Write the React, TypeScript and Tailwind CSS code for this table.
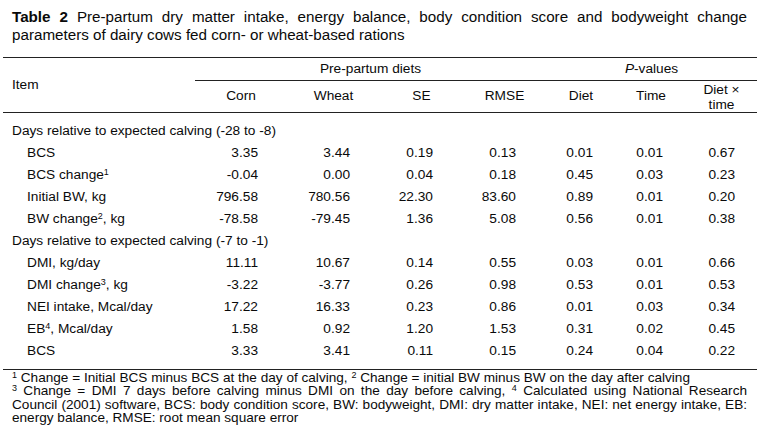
const font = { fontFamily: '"Liberation Sans", Arial, sans-serif' }

type Row = {
  label: React.ReactNode
  values?: string[]
  section?: boolean
}

const rows: Row[] = [
  { label: 'Days relative to expected calving (-28 to -8)', section: true },
  { label: 'BCS', values: ['3.35', '3.44', '0.19', '0.13', '0.01', '0.01', '0.67'] },
  {
    label: (
      <>
        BCS change<sup className="text-[9px]">1</sup>
      </>
    ),
    values: ['-0.04', '0.00', '0.04', '0.18', '0.45', '0.03', '0.23'],
  },
  { label: 'Initial BW, kg', values: ['796.58', '780.56', '22.30', '83.60', '0.89', '0.01', '0.20'] },
  {
    label: (
      <>
        BW change<sup className="text-[9px]">2</sup>, kg
      </>
    ),
    values: ['-78.58', '-79.45', '1.36', '5.08', '0.56', '0.01', '0.38'],
  },
  { label: 'Days relative to expected calving (-7 to -1)', section: true },
  { label: 'DMI, kg/day', values: ['11.11', '10.67', '0.14', '0.55', '0.03', '0.01', '0.66'] },
  {
    label: (
      <>
        DMI change<sup className="text-[9px]">3</sup>, kg
      </>
    ),
    values: ['-3.22', '-3.77', '0.26', '0.98', '0.53', '0.01', '0.53'],
  },
  { label: 'NEI intake, Mcal/day', values: ['17.22', '16.33', '0.23', '0.86', '0.01', '0.03', '0.34'] },
  {
    label: (
      <>
        EB<sup className="text-[9px]">4</sup>, Mcal/day
      </>
    ),
    values: ['1.58', '0.92', '1.20', '1.53', '0.31', '0.02', '0.45'],
  },
  { label: 'BCS', values: ['3.33', '3.41', '0.11', '0.15', '0.24', '0.04', '0.22'] },
]

// right padding per numeric column, so the numbers land where the original puts them
const valuePad = ['pr-[29px]', 'pr-[30px]', 'pr-[30px]', 'pr-[30px]', 'pr-[23px]', 'pr-[23px]', 'pr-[22px]']

export default function App() {
  return (
    <div className="h-[442px] w-[762px] overflow-hidden bg-white text-[#0a0a0a]" style={font}>
      <p className="pl-[12px] pr-[15px] pt-[8px] text-justify text-[15.2px] leading-[18px]">
        <span className="font-bold">Table 2</span> Pre-partum dry matter intake, energy balance, body condition
        score and bodyweight change parameters of dairy cows fed corn- or wheat-based rations
      </p>

      <table className="ml-[3px] mt-[13px] w-[754px] table-fixed border-collapse text-[13.7px]">
        <colgroup>
          <col className="w-[192px]" />
          <col className="w-[92px]" />
          <col className="w-[93px]" />
          <col className="w-[83px]" />
          <col className="w-[83px]" />
          <col className="w-[70px]" />
          <col className="w-[70px]" />
          <col className="w-[71px]" />
        </colgroup>
        <thead>
          <tr className="h-[23px] border-t border-[#222]">
            <th rowSpan={2} className="border-b border-[#222] pl-[9px] text-left align-middle font-normal">
              Item
            </th>
            <th colSpan={4} className="border-b border-[#222] text-center font-normal">
              Pre-partum diets
            </th>
            <th colSpan={3} className="border-b border-[#222] text-center font-normal">
              <i>P</i>-values
            </th>
          </tr>
          <tr className="h-[32px] border-b border-[#222]">
            {['Corn', 'Wheat', 'SE', 'RMSE', 'Diet', 'Time'].map((h) => (
              <th key={h} className="text-center font-normal">
                {h}
              </th>
            ))}
            <th className="text-center font-normal leading-[15px]">
              Diet ×
              <br />
              time
            </th>
          </tr>
        </thead>
        <tbody>
          <tr>
            <td colSpan={8} className="h-[8px] p-0" />
          </tr>
          {rows.map((row, i) =>
            row.section ? (
              <tr key={i} className="h-[22px]">
                <td colSpan={8} className="pl-[9px] whitespace-nowrap">
                  {row.label}
                </td>
              </tr>
            ) : (
              <tr key={i} className="h-[22px]">
                <td className="pl-[24px] whitespace-nowrap">{row.label}</td>
                {row.values!.map((v, j) => (
                  <td key={j} className={`text-right ${valuePad[j]}`}>
                    {v}
                  </td>
                ))}
              </tr>
            ),
          )}
          <tr className="border-b border-[#222]">
            <td colSpan={8} className="h-[7px] p-0" />
          </tr>
        </tbody>
      </table>

      <div className="pl-[12px] pr-[15px] pt-[1px] text-[13.6px] leading-[13.4px]">
        <p>
          <sup className="text-[9px]">1</sup> Change = Initial BCS minus BCS at the day of calving,{' '}
          <sup className="text-[9px]">2</sup> Change = initial BW minus BW on the day after calving
        </p>
        <p className="text-justify">
          <sup className="text-[9px]">3</sup> Change = DMI 7 days before calving minus DMI on the day before
          calving, <sup className="text-[9px]">4</sup> Calculated using National Research Council (2001) software,
          BCS: body condition score, BW: bodyweight, DMI: dry matter intake, NEI: net energy intake, EB: energy
          balance, RMSE: root mean square error
        </p>
      </div>
    </div>
  )
}
